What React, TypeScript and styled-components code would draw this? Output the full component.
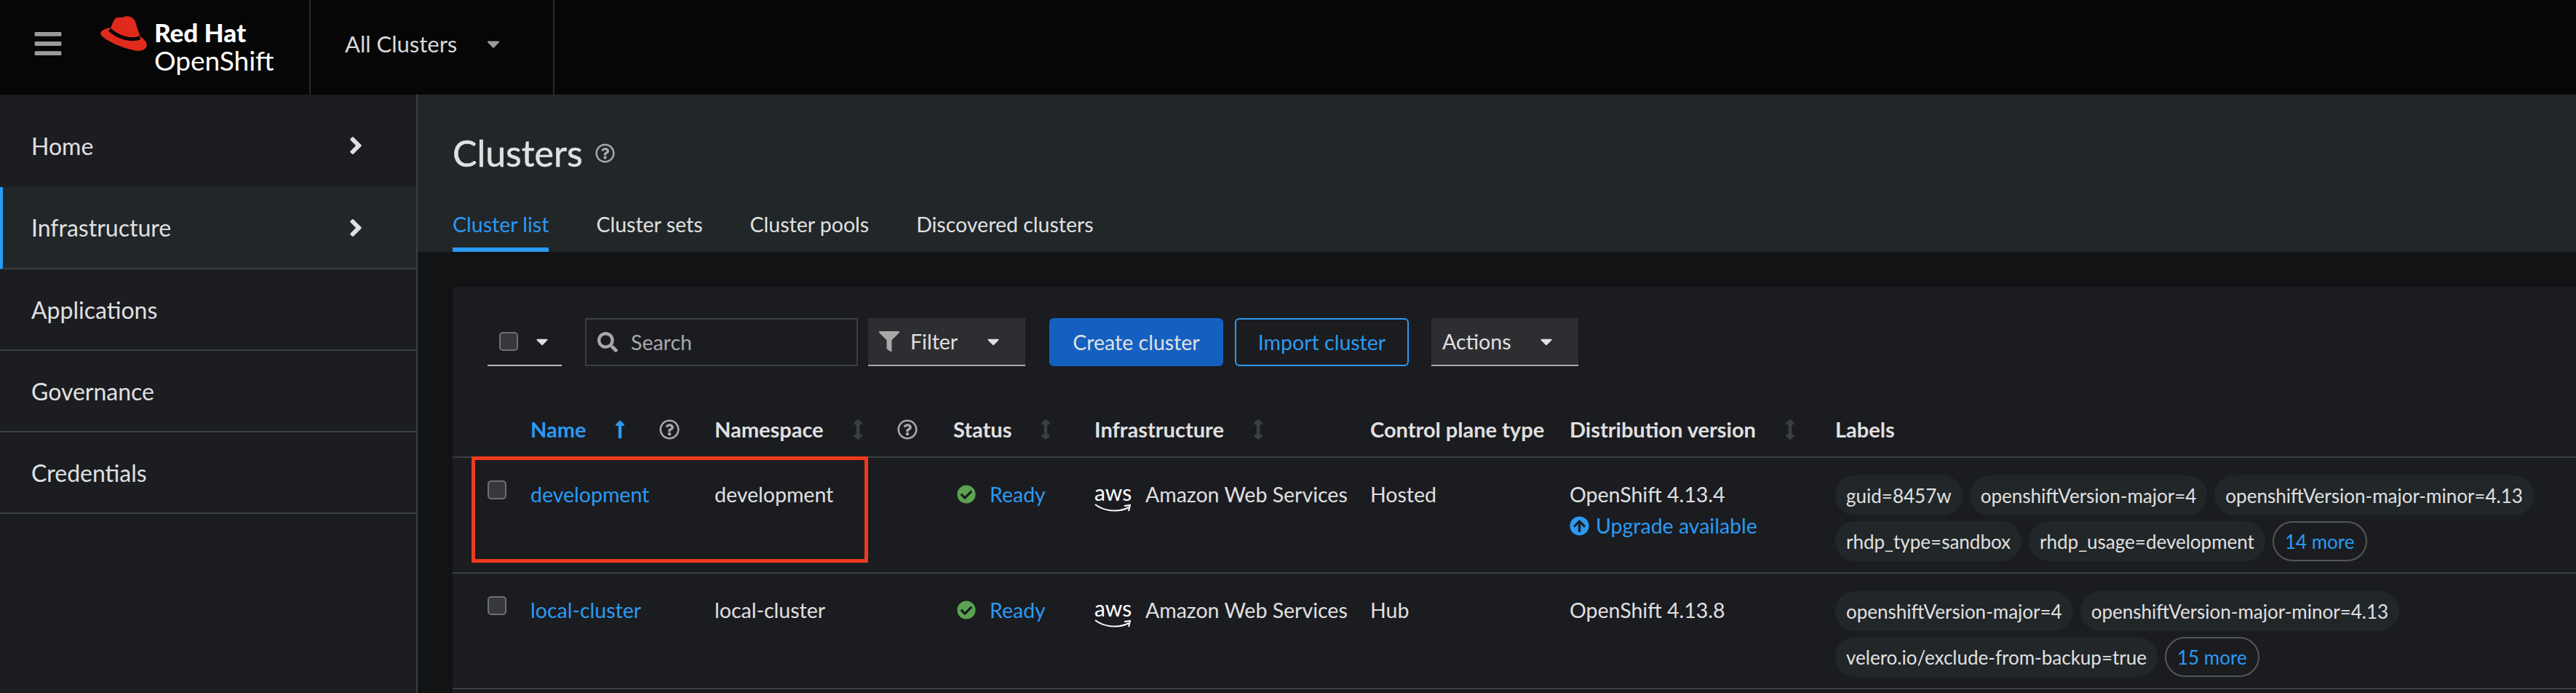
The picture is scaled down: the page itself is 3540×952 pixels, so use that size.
import React from "react";
import styled, { createGlobalStyle } from "styled-components";
import {
    FaAngleRight,
    FaArrowCircleUp,
    FaArrowsAltV,
    FaBars,
    FaCaretDown,
    FaCheckCircle,
    FaFilter,
    FaLongArrowAltUp,
    FaRegQuestionCircle,
    FaSearch,
} from "react-icons/fa";

const Colors = {
    Masthead: "#060606",
    Sidebar: "#1b1d21",
    Raised: "#212629",
    Page: "#121315",
    Card: "#1b1c20",
    Line: "#3c3f42",
    Text: "#e0e0e0",
    Muted: "#a8a8a8",
    Blue: "#2b9af3",
    Control: "#2d2e31",
};

const GlobalStyle = createGlobalStyle`
    html, body {
        margin: 0;
        background: ${Colors.Page};
        overflow: hidden;
    }
    * {
        box-sizing: border-box;
    }
`;

const Page = styled.div`
    width: 3540px;
    height: 952px;
    display: flex;
    flex-direction: column;
    overflow: hidden;
    font-family: Lato, "Open Sans", sans-serif;
    font-size: 28.5px;
    color: ${Colors.Text};
`;

const Masthead = styled.header`
    height: 130px;
    flex: none;
    display: flex;
    background: ${Colors.Masthead};
`;

const Brand = styled.div`
    width: 425px;
    padding-left: 45px;
    padding-bottom: 10px;
    display: flex;
    align-items: center;
    color: #9c9c9c;
`;

const HatLogo = styled.svg`
    width: 64px;
    height: 48px;
    margin-left: 51px;
    margin-top: -28px;
    flex: none;
`;

const BrandText = styled.div`
    margin-left: 10px;
    margin-top: 8px;
    color: #fff;
    display: flex;
    flex-direction: column;
`;

const BrandTop = styled.span`
    font-size: 35px;
    font-weight: 900;
    line-height: 38px;
`;

const BrandBottom = styled.span`
    font-size: 37px;
    line-height: 40px;
`;

const ClusterSwitcher = styled.div`
    width: 337px;
    padding: 0 0 10px 47px;
    display: flex;
    align-items: center;
    border-left: 2px solid #26282b;
    border-right: 2px solid #26282b;
    font-size: 31px;
    gap: 36px;
    color: #d8d8d8;
`;

const Body = styled.div`
    flex: 1;
    display: flex;
    min-height: 0;
`;

const Sidebar = styled.nav`
    width: 574px;
    flex: none;
    padding-top: 15px;
    background: ${Colors.Sidebar};
    border-right: 2px solid ${Colors.Line};
`;

const NavItem = styled.div<{ $active?: boolean }>`
    height: ${props => (props.$active ? 113 : 112)}px;
    padding: 0 64px 0 ${props => (props.$active ? 39 : 43)}px;
    display: flex;
    align-items: center;
    justify-content: space-between;
    font-size: 32px;
    background: ${props => (props.$active ? Colors.Raised : "transparent")};
    border-left: ${props => (props.$active ? `4px solid ${Colors.Blue}` : "none")};
    border-bottom: 2px solid ${props => (props.$active ? Colors.Line : "transparent")};
    &:nth-child(n + 3) {
        border-bottom-color: ${Colors.Line};
    }
`;

const Main = styled.main`
    flex: 1;
    min-width: 0;
    display: flex;
    flex-direction: column;
`;

const PageHeader = styled.div`
    height: 216px;
    flex: none;
    padding: 56px 0 0 48px;
    display: flex;
    flex-direction: column;
    background: ${Colors.Raised};
`;

const TitleRow = styled.div`
    display: flex;
    align-items: center;
    gap: 17px;
    height: 48px;
    color: ${Colors.Muted};
`;

const Title = styled.h1`
    margin: 0;
    font-size: 50px;
    font-weight: 400;
    color: ${Colors.Text};
    -webkit-text-stroke: 0.5px ${Colors.Text};
`;

const Tabs = styled.div`
    margin-top: 30px;
    display: flex;
    gap: 65px;
`;

const Tab = styled.div<{ $active?: boolean }>`
    height: 82px;
    padding-top: 27px;
    white-space: nowrap;
    color: ${props => (props.$active ? Colors.Blue : Colors.Text)};
    border-bottom: 6px solid ${props => (props.$active ? Colors.Blue : "transparent")};
`;

const Content = styled.div`
    flex: 1;
    min-height: 0;
    padding: 48px 0 0 48px;
`;

const Card = styled.section`
    height: 100%;
    position: relative;
    background: ${Colors.Card};
`;

const Toolbar = styled.div`
    height: 109px;
    padding: 43px 0 0 48px;
    display: flex;
    align-items: flex-start;
`;

const BulkSelect = styled.div`
    width: 102px;
    height: 66px;
    padding-left: 16px;
    display: flex;
    align-items: center;
    gap: 20px;
    border-bottom: 2px solid #b8b8b8;
    color: ${Colors.Text};
`;

const CheckBox = styled.span`
    display: block;
    flex: none;
    width: 26px;
    height: 26px;
    background: #36383b;
    border: 2px solid #6e7073;
    border-radius: 5px;
`;

const SearchBox = styled.div`
    width: 375px;
    height: 66px;
    margin-left: 32px;
    padding-left: 15px;
    display: flex;
    align-items: center;
    gap: 18px;
    border: 2px solid ${Colors.Line};
    color: ${Colors.Muted};
`;

const Select = styled.div<{ $width: number; $gap: number }>`
    width: ${props => props.$width}px;
    height: 66px;
    padding-left: 15px;
    display: flex;
    align-items: center;
    gap: ${props => props.$gap}px;
    background: ${Colors.Control};
    border-bottom: 2px solid #a8a8a8;
`;

const FilterLabel = styled.span`
    display: flex;
    align-items: center;
    gap: 15px;
`;

const FilterSelect = styled(Select)`
    margin-left: 14px;
`;

const ActionsSelect = styled(Select)`
    margin-left: 31px;
`;

const PrimaryButton = styled.div`
    width: 239px;
    height: 66px;
    margin-left: 33px;
    display: flex;
    align-items: center;
    justify-content: center;
    color: ${Colors.Text};
    background: #1460c1;
    border-radius: 6px;
`;

const SecondaryButton = styled(PrimaryButton)`
    margin-left: 16px;
    color: ${Colors.Blue};
    background: transparent;
    border: 2px solid ${Colors.Blue};
`;

const Row = styled.div<{ $height: number }>`
    height: ${props => props.$height}px;
    display: grid;
    grid-template-columns: 107px 253px 328px 194px 379px 274px 365px 1fr;
    border-bottom: 2px solid ${Colors.Line};
`;

const HeadCell = styled.div<{ $active?: boolean }>`
    padding-top: 69px;
    display: flex;
    align-items: flex-start;
    gap: 33px;
    font-size: 29px;
    font-weight: 700;
    line-height: 36px;
    white-space: nowrap;
    color: ${props => (props.$active ? Colors.Blue : Colors.Text)};
`;

const SortIcon = styled.span<{ $color: string }>`
    display: flex;
    height: 36px;
    align-items: center;
    color: ${props => props.$color};
`;

const HelpIcon = styled.span<{ $left: number }>`
    display: flex;
    height: 36px;
    align-items: center;
    margin-left: ${props => props.$left}px;
    color: ${Colors.Muted};
`;

const Cell = styled.div`
    padding-top: 32px;
    line-height: 36px;
    white-space: nowrap;
`;

const CheckCell = styled(Cell)`
    padding: 31px 0 0 48px;
`;

const LinkText = styled.span`
    color: ${Colors.Blue};
`;

const StatusCell = styled(Cell)`
    padding-left: 5px;
    display: flex;
    align-items: flex-start;
    gap: 19px;
`;

const StatusIcon = styled.span`
    display: flex;
    height: 36px;
    align-items: center;
    font-size: 26px;
    color: #5ba352;
`;

const InfraCell = styled(Cell)`
    display: flex;
    align-items: flex-start;
    gap: 20px;
`;

const AwsLogo = styled.div`
    width: 50px;
    height: 40px;
    margin-top: 4px;
    color: #fff;
`;

const AwsWord = styled.span`
    display: block;
    text-align: center;
    font-size: 30px;
    line-height: 22px;
`;

const AwsSmile = styled.svg`
    display: block;
    width: 50px;
    height: 12px;
    margin-top: 5px;
`;

const UpgradeLink = styled.div`
    margin-top: 7px;
    display: flex;
    align-items: center;
    gap: 9px;
    color: ${Colors.Blue};
`;

const LabelCell = styled.div`
    padding-top: 24px;
    display: flex;
    flex-wrap: wrap;
    align-content: flex-start;
    column-gap: 10px;
    row-gap: 8px;
`;

const Chip = styled.span`
    height: 55px;
    padding: 0 15px;
    display: flex;
    align-items: center;
    white-space: nowrap;
    font-size: 26px;
    background: ${Colors.Raised};
    border-radius: 28px;
`;

const MoreChip = styled(Chip)`
    color: ${Colors.Blue};
    background: transparent;
    border: 2px solid #54575a;
`;

const Callout = styled.div`
    position: absolute;
    left: 26px;
    top: 233px;
    width: 545px;
    height: 146px;
    border: 5px solid #ee3a1e;
    pointer-events: none;
`;

type Cluster = {
    name: string;
    controlPlane: string;
    version: string;
    upgrade?: boolean;
    labels: string[];
    more: string;
};

const clusters: Cluster[] = [
    {
        name: "development",
        controlPlane: "Hosted",
        version: "OpenShift 4.13.4",
        upgrade: true,
        labels: [
            "guid=8457w",
            "openshiftVersion-major=4",
            "openshiftVersion-major-minor=4.13",
            "rhdp_type=sandbox",
            "rhdp_usage=development",
        ],
        more: "14 more",
    },
    {
        name: "local-cluster",
        controlPlane: "Hub",
        version: "OpenShift 4.13.8",
        labels: [
            "openshiftVersion-major=4",
            "openshiftVersion-major-minor=4.13",
            "velero.io/exclude-from-backup=true",
        ],
        more: "15 more",
    },
];

const navItems = ["Home", "Infrastructure", "Applications", "Governance", "Credentials"];
const tabs = ["Cluster list", "Cluster sets", "Cluster pools", "Discovered clusters"];

const App = () => {
    return (
        <Page>
            <GlobalStyle />
            <Masthead>
                <Brand>
                    <FaBars size={42} />
                    <HatLogo viewBox="0 0 193 145">
                        <path
                            fill="#e02b1c"
                            d="M42 50C50 30 56 14 64 8C72 3 82 10 100 2C120 -2 138 8 144 22C150 42 158 66 164 84C180 96 194 108 192 124C188 142 166 146 148 144C100 138 2 96 0 72C2 60 22 50 42 50Z"
                        />
                        <path fill="none" stroke="#060606" strokeWidth="15" d="M38 56C70 88 128 106 164 90" />
                    </HatLogo>
                    <BrandText>
                        <BrandTop>Red Hat</BrandTop>
                        <BrandBottom>OpenShift</BrandBottom>
                    </BrandText>
                </Brand>
                <ClusterSwitcher>
                    All Clusters
                    <FaCaretDown color="#9c9c9c" size={28} />
                </ClusterSwitcher>
            </Masthead>
            <Body>
                <Sidebar>
                    {navItems.map((item, index) => (
                        <NavItem key={item} $active={index === 1}>
                            {item}
                            {index < 2 && <FaAngleRight size={38} />}
                        </NavItem>
                    ))}
                </Sidebar>
                <Main>
                    <PageHeader>
                        <TitleRow>
                            <Title>Clusters</Title>
                            <FaRegQuestionCircle size={27} />
                        </TitleRow>
                        <Tabs>
                            {tabs.map((tab, index) => (
                                <Tab key={tab} $active={index === 0}>
                                    {tab}
                                </Tab>
                            ))}
                        </Tabs>
                    </PageHeader>
                    <Content>
                        <Card>
                            <Toolbar>
                                <BulkSelect>
                                    <CheckBox />
                                    <FaCaretDown size={26} />
                                </BulkSelect>
                                <SearchBox>
                                    <FaSearch size={28} />
                                    Search
                                </SearchBox>
                                <FilterSelect $width={216} $gap={36}>
                                    <FilterLabel>
                                        <FaFilter size={28} color={Colors.Muted} />
                                        Filter
                                    </FilterLabel>
                                    <FaCaretDown size={26} />
                                </FilterSelect>
                                <PrimaryButton>Create cluster</PrimaryButton>
                                <SecondaryButton>Import cluster</SecondaryButton>
                                <ActionsSelect $width={202} $gap={36}>
                                    Actions
                                    <FaCaretDown size={26} />
                                </ActionsSelect>
                            </Toolbar>
                            <Row $height={126}>
                                <div />
                                <HeadCell $active>
                                    Name
                                    <SortIcon $color={Colors.Blue}>
                                        <FaLongArrowAltUp size={28} />
                                    </SortIcon>
                                    <HelpIcon $left={7}>
                                        <FaRegQuestionCircle size={28} />
                                    </HelpIcon>
                                </HeadCell>
                                <HeadCell>
                                    Namespace
                                    <SortIcon $color={Colors.Line}>
                                        <FaArrowsAltV size={28} />
                                    </SortIcon>
                                    <HelpIcon $left={7}>
                                        <FaRegQuestionCircle size={28} />
                                    </HelpIcon>
                                </HeadCell>
                                <HeadCell>
                                    Status
                                    <SortIcon $color={Colors.Line}>
                                        <FaArrowsAltV size={28} />
                                    </SortIcon>
                                </HeadCell>
                                <HeadCell>
                                    Infrastructure
                                    <SortIcon $color={Colors.Line}>
                                        <FaArrowsAltV size={28} />
                                    </SortIcon>
                                </HeadCell>
                                <HeadCell>Control plane type</HeadCell>
                                <HeadCell>
                                    Distribution version
                                    <SortIcon $color={Colors.Line}>
                                        <FaArrowsAltV size={28} />
                                    </SortIcon>
                                </HeadCell>
                                <HeadCell>Labels</HeadCell>
                            </Row>
                            {clusters.map(cluster => (
                                <Row key={cluster.name} $height={159}>
                                    <CheckCell>
                                        <CheckBox />
                                    </CheckCell>
                                    <Cell>
                                        <LinkText>{cluster.name}</LinkText>
                                    </Cell>
                                    <Cell>{cluster.name}</Cell>
                                    <StatusCell>
                                        <StatusIcon>
                                            <FaCheckCircle />
                                        </StatusIcon>
                                        <LinkText>Ready</LinkText>
                                    </StatusCell>
                                    <InfraCell>
                                        <AwsLogo>
                                            <AwsWord>aws</AwsWord>
                                            <AwsSmile viewBox="0 0 50 12">
                                                <path
                                                    fill="none"
                                                    stroke="#fff"
                                                    strokeWidth="2"
                                                    d="M1 1C14 11 34 12 47 5M41 3L49 2L47 10"
                                                />
                                            </AwsSmile>
                                        </AwsLogo>
                                        Amazon Web Services
                                    </InfraCell>
                                    <Cell>{cluster.controlPlane}</Cell>
                                    <Cell>
                                        {cluster.version}
                                        {cluster.upgrade && (
                                            <UpgradeLink>
                                                <FaArrowCircleUp size={27} />
                                                Upgrade available
                                            </UpgradeLink>
                                        )}
                                    </Cell>
                                    <LabelCell>
                                        {cluster.labels.map(label => (
                                            <Chip key={label}>{label}</Chip>
                                        ))}
                                        <MoreChip>{cluster.more}</MoreChip>
                                    </LabelCell>
                                </Row>
                            ))}
                            <Callout />
                        </Card>
                    </Content>
                </Main>
            </Body>
        </Page>
    );
};

export default App;
